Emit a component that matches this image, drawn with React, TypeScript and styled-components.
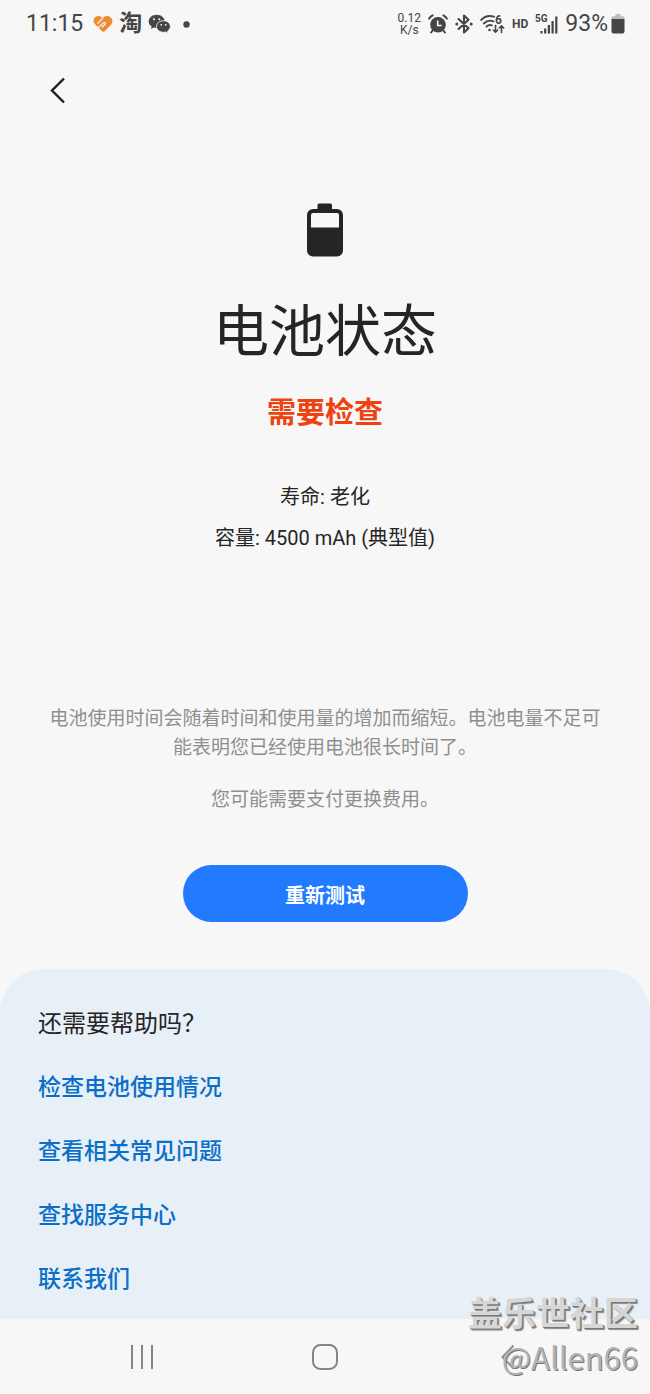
import React from "react";
import styled, { createGlobalStyle } from "styled-components";

const ink = "#252525";
const statusInk = "#454545";

const GlobalStyle = createGlobalStyle`
  * { box-sizing: border-box; }
  body {
    margin: 0;
    background: #f7f7f7;
    color: ${ink};
    font-family: Roboto, "Noto Sans CJK SC", sans-serif;
  }
  h1, h2, p, ul { margin: 0; padding: 0; font-weight: 400; }
  button { font-family: inherit; border: 0; padding: 0; cursor: pointer; }
  svg { display: block; flex: none; }
`;

const Screen = styled.div`
  position: relative;
  min-height: 100vh;
  display: flex;
  flex-direction: column;
`;

const StatusBar = styled.header`
  display: flex;
  justify-content: space-between;
  align-items: center;
  height: 48px;
  padding: 0 25px 0 26px;
  color: ${statusInk};
`;

const StatusGroup = styled.div<{ $gap: number }>`
  display: flex;
  align-items: center;
  gap: ${(p) => p.$gap}px;
`;

const StatusText = styled.span`
  font-size: 23px;
  line-height: 28px;
`;

const AppGlyph = styled.span`
  font-size: 23px;
  line-height: 28px;
  font-weight: 700;
`;

const AppIcons = styled.div`
  display: flex;
  align-items: center;
  gap: 6px;
  padding-left: 4px;
`;

const DotSlot = styled.span`
  padding-left: 6px;
`;

const Speed = styled.span`
  display: flex;
  flex-direction: column;
  align-items: center;
  font-size: 12px;
  line-height: 12px;
`;

const HdLabel = styled.span`
  font-size: 12px;
  line-height: 16px;
  font-weight: 700;
`;

const BatteryLevel = styled.span`
  display: flex;
  align-items: center;
  gap: 3px;
`;

const Toolbar = styled.nav`
  display: flex;
  align-items: center;
  height: 84px;
  padding: 0 36px;
`;

const IconButton = styled.button`
  display: flex;
  align-items: center;
  justify-content: center;
  width: 44px;
  height: 44px;
  background: transparent;
`;

const Main = styled.main`
  flex: 1;
  display: flex;
  flex-direction: column;
  align-items: center;
  padding: 71px 48px 47px;
  text-align: center;
`;

const Title = styled.h1`
  margin-top: 35px;
  font-size: 56px;
  line-height: 80px;
`;

const Verdict = styled.p`
  margin-top: 21px;
  font-size: 29px;
  line-height: 40px;
  font-weight: 700;
  color: #ec4411;
`;

const Facts = styled.div`
  margin-top: 44px;
  font-size: 20px;
  line-height: 41px;
`;

const Notes = styled.div`
  display: flex;
  flex-direction: column;
  gap: 23px;
  margin-top: 145px;
  font-size: 19px;
  line-height: 29px;
  color: #8f8f8f;
`;

const PrimaryButton = styled.button`
  width: 285px;
  height: 57px;
  margin-top: 51px;
  padding-top: 4px;
  border-radius: 29px;
  background: #227bff;
  color: #fff;
  font-size: 20px;
  line-height: 28px;
  font-weight: 700;
`;

const HelpPanel = styled.section`
  padding: 37px 38px 21px;
  border-radius: 44px 44px 0 0;
  background: #e7eff7;
`;

const HelpTitle = styled.h2`
  font-size: 24px;
  line-height: 36px;
`;

const HelpList = styled.ul`
  display: flex;
  flex-direction: column;
  align-items: flex-start;
  gap: 28px;
  margin-top: 28px;
  list-style: none;
`;

const HelpLink = styled.a`
  display: block;
  font-size: 23px;
  line-height: 36px;
  font-weight: 500;
  color: #0b6fc9;
  text-decoration: none;
`;

const NavBar = styled.nav`
  display: grid;
  grid-template-columns: repeat(3, 1fr);
  justify-items: center;
  align-items: center;
  height: 76px;
  padding: 0 50px;
`;

const Watermark = styled.div`
  position: absolute;
  right: 12px;
  bottom: 16px;
  display: flex;
  flex-direction: column;
  align-items: flex-end;
  color: #d6d6d6;
  text-shadow: 1px 1px 0 #777, 2px 2px 1px #888;
  pointer-events: none;
`;

const WatermarkName = styled.span`
  font-size: 34px;
  line-height: 42px;
  font-weight: 700;
`;

const WatermarkUser = styled.span`
  font-family: "Noto Sans CJK SC", sans-serif;
  font-size: 31px;
  line-height: 44px;
  color: #b4b4b4;
  text-shadow: 1px 1px 0 #777;
`;

const HeartIcon = () => (
  <svg width="20" height="18" viewBox="0 0 21 19">
    <path d="M10 3.200C8 .6 3.800.3 1.700 2.900-.2 5.300.4 8 2.200 9.800l7.400 7.400c.8.8 1.800.8 2.600 0l6.500-6.600c2.100-2.200 2.300-5.500.3-7.700C16.700.3 12.500.4 10 3.200Z" fill="#ed8b32" />
    <path d="M4.500 9.200 10.800 2.800M5 14l5.800-5.700c1.500-1.400 3 .1 1.700 1.600l-3.300 3.300" fill="none" stroke="#f7f7f7" strokeWidth="1.300" />
  </svg>
);

const WeChatIcon = () => (
  <svg width="23" height="20" viewBox="0 0 23 20">
    <path d="M8.700.8C4.300.8.700 3.700.700 7.400c0 2.100 1.200 3.900 3 5.100l-.8 2.600 3-1.500c.9.2 1.800.4 2.800.4 4.400 0 8-2.900 8-6.600S13.100.8 8.700.8Z" fill={statusInk} />
    <path d="M15.500 6.700c-3.900 0-7 2.600-7 5.800s3.100 5.800 7 5.800c.8 0 1.600-.1 2.300-.3l2.500 1.300-.7-2.200c1.700-1.100 2.800-2.700 2.800-4.600 0-3.200-3.100-5.800-6.900-5.800Z" fill={statusInk} stroke="#f7f7f7" strokeWidth="0.900" />
    <g fill="#f7f7f7">
      <circle cx="6" cy="5.300" r="1" />
      <circle cx="11.300" cy="5.300" r="1" />
      <circle cx="13.200" cy="10.800" r="0.900" />
      <circle cx="17.700" cy="10.800" r="0.900" />
    </g>
  </svg>
);

const DotIcon = () => (
  <svg width="7" height="7" viewBox="0 0 7 7">
    <circle cx="3.500" cy="3.500" r="3.200" fill={statusInk} />
  </svg>
);

const AlarmIcon = () => (
  <svg width="20" height="20" viewBox="0 0 20 20">
    <circle cx="10" cy="10.800" r="7.800" fill={statusInk} />
    <path d="M1.200 4.600C2 3.200 3 2.200 4.600 1.400M18.800 4.600C18 3.200 17 2.200 15.400 1.400M4.600 16.500l-1.500 2M15.400 16.500l1.500 2" fill="none" stroke={statusInk} strokeWidth="2" strokeLinecap="round" />
    <path d="M9.700 6.500v5h4" fill="none" stroke="#f7f7f7" strokeWidth="1.600" />
  </svg>
);

const BluetoothIcon = () => (
  <svg width="18" height="20" viewBox="0 0 18 20">
    <path d="m3.500 5 10 9.200L9 18.500v-17l4.500 4.300-10 9.200" fill="none" stroke={statusInk} strokeWidth="2.100" strokeLinejoin="round" strokeLinecap="round" />
    <g fill={statusInk}>
      <circle cx="1.800" cy="10" r="1.500" />
      <circle cx="16.200" cy="10" r="1.500" />
    </g>
  </svg>
);

const WifiIcon = () => (
  <svg width="25" height="22" viewBox="0 0 25 22">
    <g fill="none" stroke={statusInk} strokeWidth="1.900" strokeLinecap="round">
      <path d="M1.200 7C4.500 3.300 9.500 2.200 14 3.700" />
      <path d="M3.800 10.500c2.600-2.700 6.300-3.500 9.700-2.200" />
      <path d="M6.500 13.700c1.600-1.600 3.400-2 5.300-1.300" />
      <path d="M15.500 12.500v6.500M13.300 17l2.200 2.200 2.200-2.200M21.500 19.500V13M19.300 15l2.200-2.200 2.200 2.200" strokeWidth="1.600" />
    </g>
    <circle cx="9.500" cy="17" r="1.300" fill={statusInk} />
    <text x="15" y="11" fontSize="12" fontWeight="700" fill={statusInk}>6</text>
  </svg>
);

const SignalIcon = () => (
  <svg width="23" height="22" viewBox="0 0 23 22">
    <text x="0" y="9" fontSize="10" fontWeight="700" fill={statusInk}>5G</text>
    <path d="M6.500 18v2.500M10.200 15.500v5M13.900 12v8.500M17.600 8v12.500M21.300 3.500v17" stroke={statusInk} strokeWidth="2.200" fill="none" />
  </svg>
);

const SmallBatteryIcon = () => (
  <svg width="14" height="20" viewBox="0 0 14 20">
    <path d="M4.500 0h5v2.200H12a1.500 1.500 0 0 1 1.500 1.500V6H.5V3.700A1.500 1.500 0 0 1 2 2.200h2.500Z" fill="#bdbdbd" />
    <path d="M.5 5h13v12.500a2 2 0 0 1-2 2h-9a2 2 0 0 1-2-2Z" fill={statusInk} />
  </svg>
);

const BatteryIcon = () => (
  <svg width="36" height="54" viewBox="0 0 36 54">
    <path d="M10.500 8V2A1.500 1.500 0 0 1 12 .5h11.500A1.500 1.500 0 0 1 25 2V8Z" fill={ink} />
    <rect x="2" y="8" width="32" height="43.500" rx="4" fill="#f9f9f9" stroke={ink} strokeWidth="4" />
    <path d="M2 24.500h32V47a4 4 0 0 1-4 4H6a4 4 0 0 1-4-4Z" fill={ink} />
  </svg>
);

const BackIcon = () => (
  <svg width="16" height="28" viewBox="0 0 16 28">
    <path d="M14 2.500 2 14.500l12 12" fill="none" stroke="#1c1c1c" strokeWidth="2.400" />
  </svg>
);

const RecentsIcon = () => (
  <svg width="24" height="26" viewBox="0 0 24 26">
    <path d="M2 1v24M12 1v24M22 1v24" stroke="#858585" strokeWidth="2" />
  </svg>
);

const HomeIcon = () => (
  <svg width="26" height="26" viewBox="0 0 26 26">
    <rect x="1" y="1" width="24" height="24" rx="7.500" fill="none" stroke="#858585" strokeWidth="2" />
  </svg>
);

const NavBackIcon = () => (
  <svg width="14" height="26" viewBox="0 0 14 26">
    <path d="M12.500 1.500 1.500 13l11 11.500" fill="none" stroke="#8f8f8f" strokeWidth="2" />
  </svg>
);

const helpLinks = ["检查电池使用情况", "查看相关常见问题", "查找服务中心", "联系我们"];

export default function App() {
  return (
    <Screen lang="zh-CN">
      <GlobalStyle />
      <StatusBar>
        <StatusGroup $gap={6}>
          <StatusText>11:15</StatusText>
          <AppIcons>
            <HeartIcon />
            <AppGlyph>淘</AppGlyph>
            <WeChatIcon />
            <DotSlot>
              <DotIcon />
            </DotSlot>
          </AppIcons>
        </StatusGroup>
        <StatusGroup $gap={7}>
          <Speed>
            <span>0.12</span>
            <span>K/s</span>
          </Speed>
          <AlarmIcon />
          <BluetoothIcon />
          <WifiIcon />
          <HdLabel>HD</HdLabel>
          <SignalIcon />
          <BatteryLevel>
            <StatusText>93%</StatusText>
            <SmallBatteryIcon />
          </BatteryLevel>
        </StatusGroup>
      </StatusBar>

      <Toolbar>
        <IconButton type="button" aria-label="返回">
          <BackIcon />
        </IconButton>
      </Toolbar>

      <Main>
        <BatteryIcon />
        <Title>电池状态</Title>
        <Verdict>需要检查</Verdict>
        <Facts>
          <p>寿命: 老化</p>
          <p>容量: 4500 mAh (典型值)</p>
        </Facts>
        <Notes>
          <p>电池使用时间会随着时间和使用量的增加而缩短。电池电量不足可能表明您已经使用电池很长时间了。</p>
          <p>您可能需要支付更换费用。</p>
        </Notes>
        <PrimaryButton type="button">重新测试</PrimaryButton>
      </Main>

      <HelpPanel>
        <HelpTitle>还需要帮助吗？</HelpTitle>
        <HelpList>
          {helpLinks.map((label) => (
            <li key={label}>
              <HelpLink href="#">{label}</HelpLink>
            </li>
          ))}
        </HelpList>
      </HelpPanel>

      <NavBar>
        <IconButton type="button" aria-label="最近任务">
          <RecentsIcon />
        </IconButton>
        <IconButton type="button" aria-label="主屏幕">
          <HomeIcon />
        </IconButton>
        <IconButton type="button" aria-label="后退">
          <NavBackIcon />
        </IconButton>
      </NavBar>

      <Watermark>
        <WatermarkName>盖乐世社区</WatermarkName>
        <WatermarkUser>@Allen66</WatermarkUser>
      </Watermark>
    </Screen>
  );
}
